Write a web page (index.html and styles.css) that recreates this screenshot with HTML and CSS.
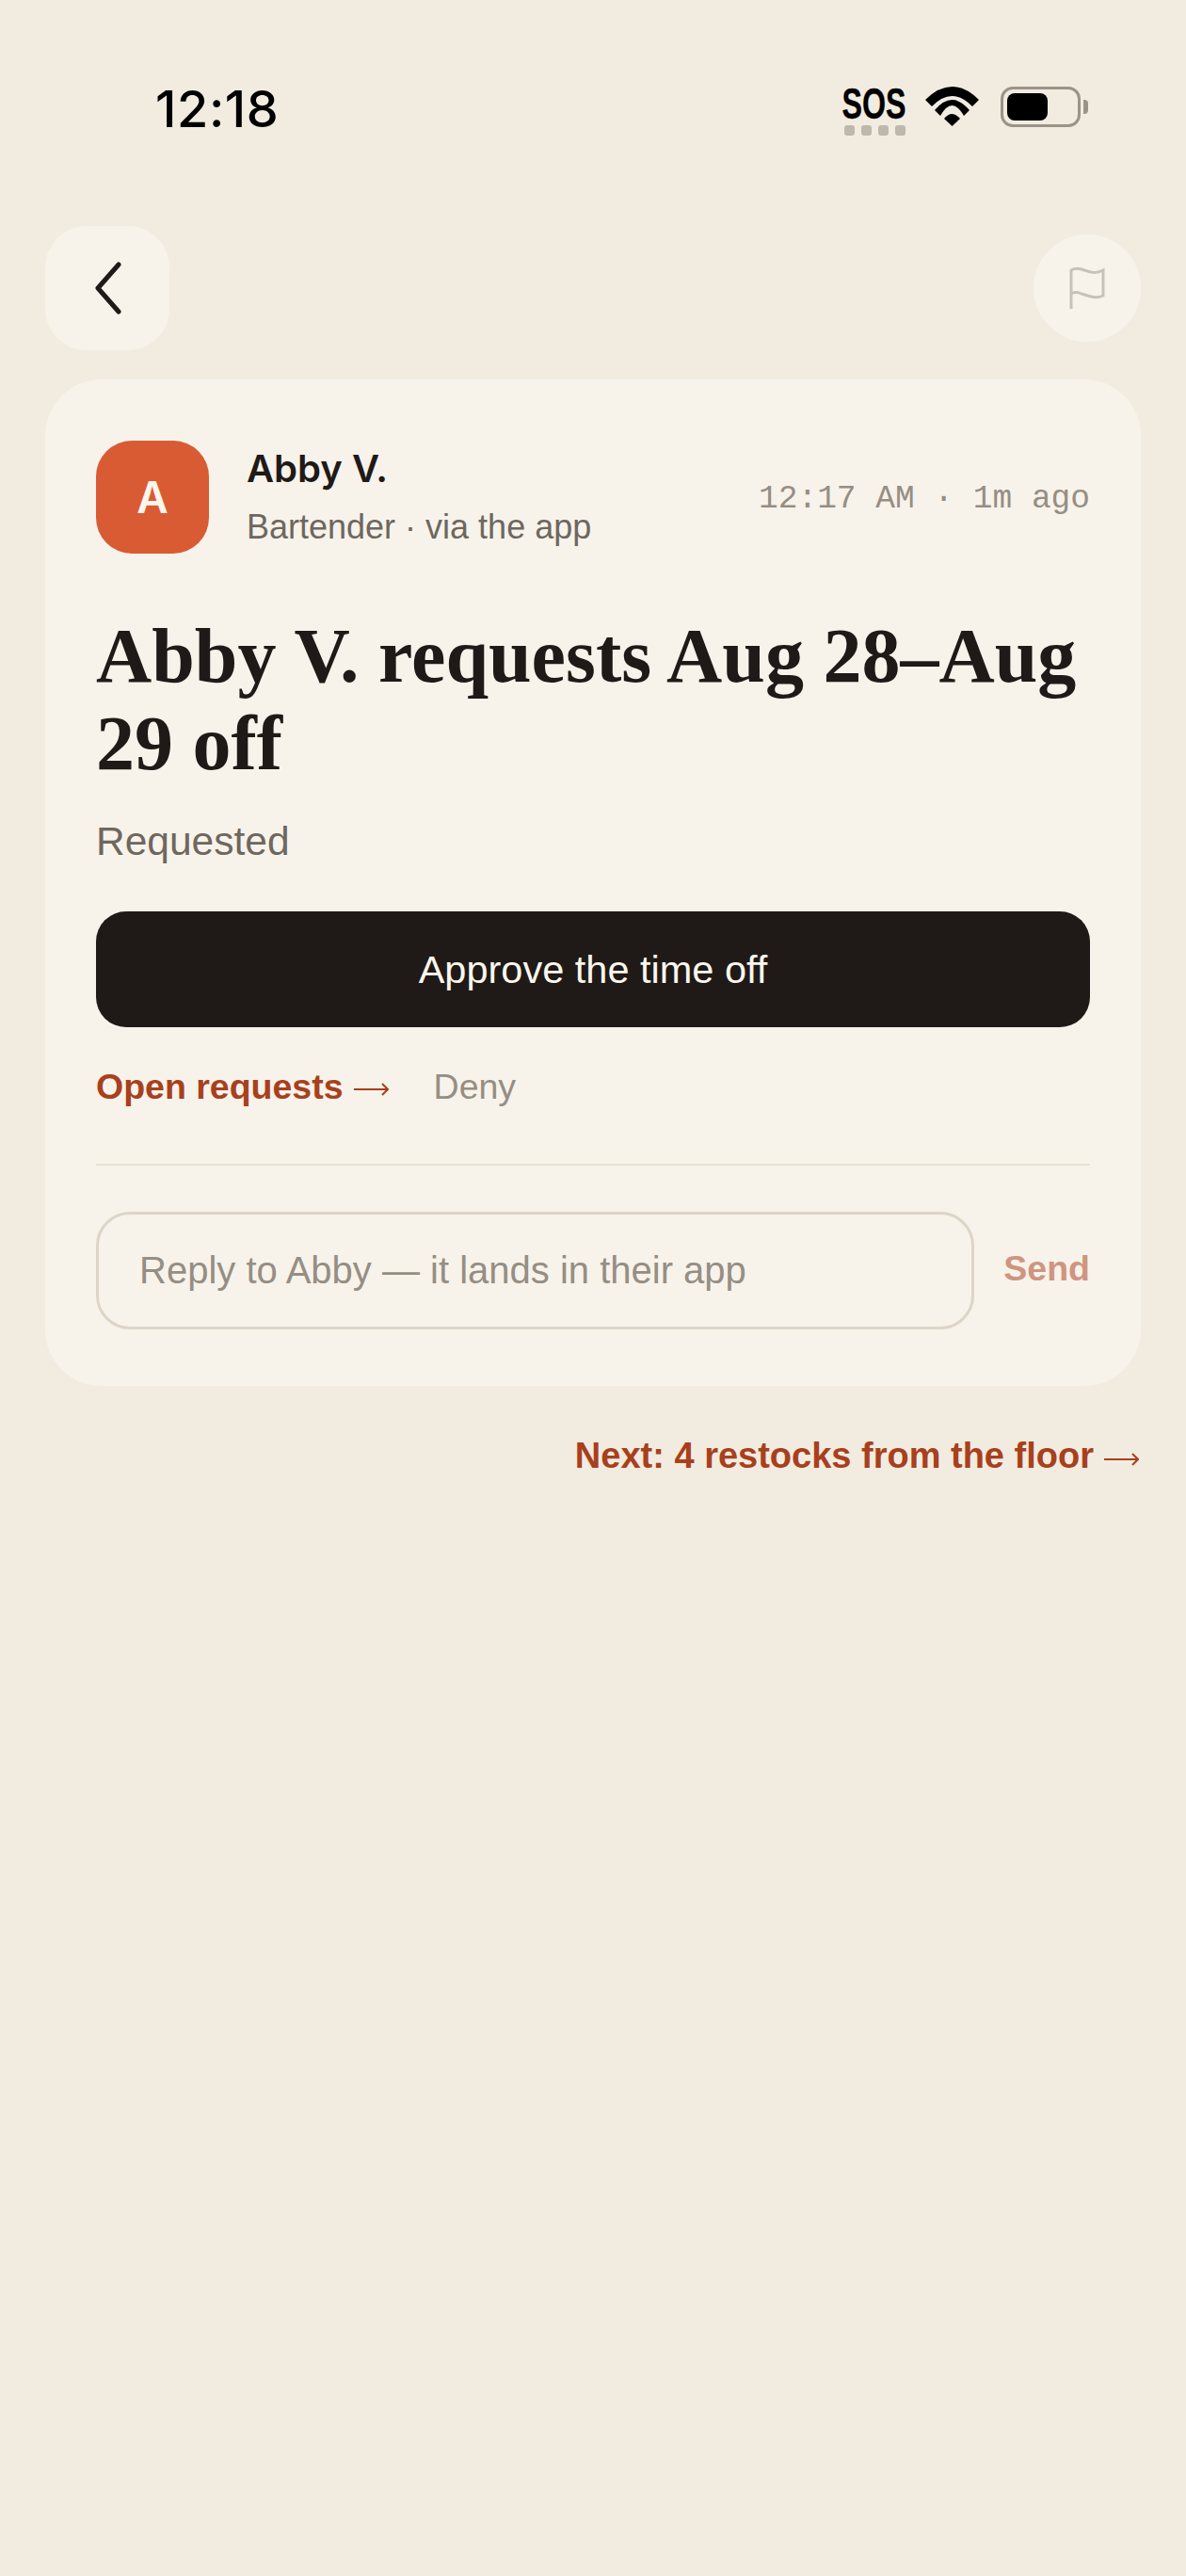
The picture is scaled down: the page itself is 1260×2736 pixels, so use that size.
FILE: index.html
```html
<!DOCTYPE html>
<html lang="en">
<head>
  <meta charset="UTF-8" />
  <title>Time off request</title>
  <link rel="stylesheet" href="styles.css">
</head>
<body>
  <div class="status-bar">
    <span class="clock">12:18</span>
    <div class="status-icons">
      <div class="sos">
        <span class="sos-text">SOS</span>
        <div class="sos-dots"><i></i><i></i><i></i><i></i></div>
      </div>
      <svg class="wifi" width="57" height="42" viewBox="0 0 57 42">
        <path d="M0 14 Q28.5 -14 57 14 L50 21 Q28.5 -1 7 21 Z" fill="#000"/>
        <path d="M10 25 Q28.5 3 47 25 L41 31 Q28.5 9 16 31 Z" fill="#000"/>
        <path d="M20 34 Q28.5 24 37 34 L28.5 42 Z" fill="#000"/>
      </svg>
      <div class="battery">
        <div class="battery-body"><div class="battery-fill"></div></div>
        <div class="battery-nub"></div>
      </div>
    </div>
  </div>

  <div class="top-row">
    <button class="back-btn">
      <svg width="30" height="58" viewBox="0 0 30 58">
        <path d="M27 4 L5 29 L27 54" fill="none" stroke="#1f1a17" stroke-width="5" stroke-linecap="round" stroke-linejoin="round"/>
      </svg>
    </button>
    <button class="flag-btn">
      <svg width="38" height="46" viewBox="0 0 38 46">
        <path d="M2 45 V4 C5 2 9 2 13 3 C20 5 26 9 36 4 V31 C27 35 20 31 13 29 C9 27 5 27 2 29" fill="none" stroke="#c9c1b7" stroke-width="3"/>
      </svg>
    </button>
  </div>

  <div class="card">
    <div class="sender">
      <div class="avatar">A</div>
      <div class="sender-info">
        <div class="sender-name">Abby V.</div>
        <div class="sender-role">Bartender · via the app</div>
      </div>
      <div class="sender-time">12:17 AM · 1m ago</div>
    </div>

    <h1 class="title">Abby V. requests Aug 28–&#8288;Aug 29 off</h1>
    <p class="state">Requested</p>

    <button class="approve-btn">Approve the time off</button>

    <div class="actions">
      <a class="link-open">Open requests
        <svg class="arrow" width="37" height="14" viewBox="0 0 37 14">
          <path d="M0 7 H36 M30 1 L36 7 L30 13" fill="none" stroke="currentColor" stroke-width="2"/>
        </svg>
      </a>
      <a class="link-deny">Deny</a>
    </div>

    <div class="reply">
      <div class="reply-input">Reply to Abby — it lands in their app</div>
      <a class="reply-send">Send</a>
    </div>
  </div>

  <div class="next-row">
    <a class="link-next">Next: 4 restocks from the floor
      <svg class="arrow" width="37" height="14" viewBox="0 0 37 14">
        <path d="M0 7 H36 M30 1 L36 7 L30 13" fill="none" stroke="currentColor" stroke-width="2"/>
      </svg>
    </a>
  </div>
</body>
</html>
```

FILE: styles.css
```css
body {
  margin: 0;
  height: 2736px;
  background: #f2ece0;
  font-family: 'Liberation Sans', Arial, sans-serif;
  color: #1f1a17;
  overflow: hidden;
}

button {
  border: none;
  padding: 0;
  font-family: inherit;
}

.status-bar {
  display: flex;
  justify-content: space-between;
  align-items: flex-start;
  height: 240px;
  box-sizing: border-box;
  padding: 84px 104px 0 165px;
}

.clock {
  font-family: 'Inter', sans-serif;
  font-size: 54px;
  font-weight: 500;
  line-height: 64px;
  color: #000;
  letter-spacing: 0.6px;
}

.status-icons {
  display: flex;
  align-items: flex-start;
  padding-top: 8px;
}

.sos {
  display: flex;
  flex-direction: column;
  align-items: center;
  width: 70px;
  margin-right: 19px;
}

.sos-text {
  font-family: 'Liberation Sans', sans-serif;
  font-weight: 700;
  font-size: 46px;
  line-height: 36px;
  color: #000;
  -webkit-text-stroke: 0.4px #000;
  transform: scaleX(0.7);
}

.sos-dots {
  display: flex;
  gap: 7px;
  margin-top: 5px;
}

.sos-dots i {
  width: 11px;
  height: 11px;
  border-radius: 3px;
  background: #bfb7ad;
}

.wifi {
  margin-right: 23px;
}

.battery {
  display: flex;
  align-items: center;
  gap: 3px;
  height: 43px;
}

.battery-body {
  width: 85px;
  height: 43px;
  box-sizing: border-box;
  border: 3px solid #9c9388;
  border-radius: 13px;
  padding: 4px;
}

.battery-fill {
  width: 43px;
  height: 29px;
  background: #000;
  border-radius: 8px;
}

.battery-nub {
  width: 5px;
  height: 15px;
  background: #9c9388;
  border-radius: 0 4px 4px 0;
}

.top-row {
  display: flex;
  justify-content: space-between;
  align-items: center;
  padding: 0 48px;
  height: 132px;
}

.back-btn {
  width: 132px;
  height: 132px;
  border-radius: 44px;
  background: #f7f3eb;
  display: flex;
  align-items: center;
  justify-content: center;
}

.flag-btn {
  width: 114px;
  height: 114px;
  border-radius: 50%;
  background: #f7f3eb;
  display: flex;
  align-items: center;
  justify-content: center;
}

.card {
  margin: 31px 48px 0;
  padding: 65px 54px 60px;
  background: #f7f3eb;
  border-radius: 60px;
}

.sender {
  display: flex;
  align-items: center;
}

.avatar {
  width: 120px;
  height: 120px;
  border-radius: 38px;
  background: #d95b33;
  color: #fbf6ec;
  font-family: 'Inter', sans-serif;
  font-size: 46px;
  font-weight: 600;
  display: flex;
  align-items: center;
  justify-content: center;
  margin-right: 40px;
}

.sender-info {
  flex: 1;
}

.sender-name {
  font-family: 'Inter', sans-serif;
  font-size: 40px;
  font-weight: 600;
  line-height: 48px;
}

.sender-role {
  font-size: 36px;
  line-height: 44px;
  margin-top: 16px;
  color: #6e675e;
}

.sender-time {
  font-family: 'Liberation Mono', monospace;
  font-size: 34.5px;
  color: #968e83;
  padding-top: 2px;
}

.title {
  margin: 62px 0 0;
  font-family: 'Liberation Serif', serif;
  font-weight: 700;
  font-size: 82px;
  line-height: 93px;
  color: #1f1a17;
}

.state {
  margin: 33px 0 0;
  font-size: 42.5px;
  line-height: 50px;
  color: #6e675e;
}

.approve-btn {
  display: block;
  width: 100%;
  height: 123px;
  margin-top: 49px;
  border-radius: 32px;
  background: #1f1a17;
  color: #fbf6ec;
  font-size: 41.5px;
}

.actions {
  display: flex;
  gap: 48px;
  align-items: center;
  margin-top: 36px;
  height: 54px;
  font-size: 37.5px;
  padding-bottom: 55px;
  border-bottom: 2px solid #e8e1d4;
}

.link-open,
.link-next {
  display: inline-flex;
  align-items: center;
  gap: 11px;
  color: #a8401d;
  font-weight: 700;
}

.arrow {
  margin-top: 6px;
}

.link-deny {
  color: #968e83;
}

.reply {
  display: flex;
  align-items: center;
  gap: 31px;
  margin-top: 49px;
}

.reply-input {
  flex: 1;
  height: 125px;
  box-sizing: border-box;
  display: flex;
  align-items: center;
  padding: 0 43px;
  border: 3px solid #ddd5c6;
  border-radius: 36px;
  font-size: 40px;
  color: #968e83;
}

.reply-send {
  font-size: 37.5px;
  font-weight: 700;
  color: #cf9580;
  padding-bottom: 4px;
}

.next-row {
  display: flex;
  justify-content: flex-end;
  padding: 53px 50px 0 48px;
}

.link-next {
  font-size: 38px;
}
```
